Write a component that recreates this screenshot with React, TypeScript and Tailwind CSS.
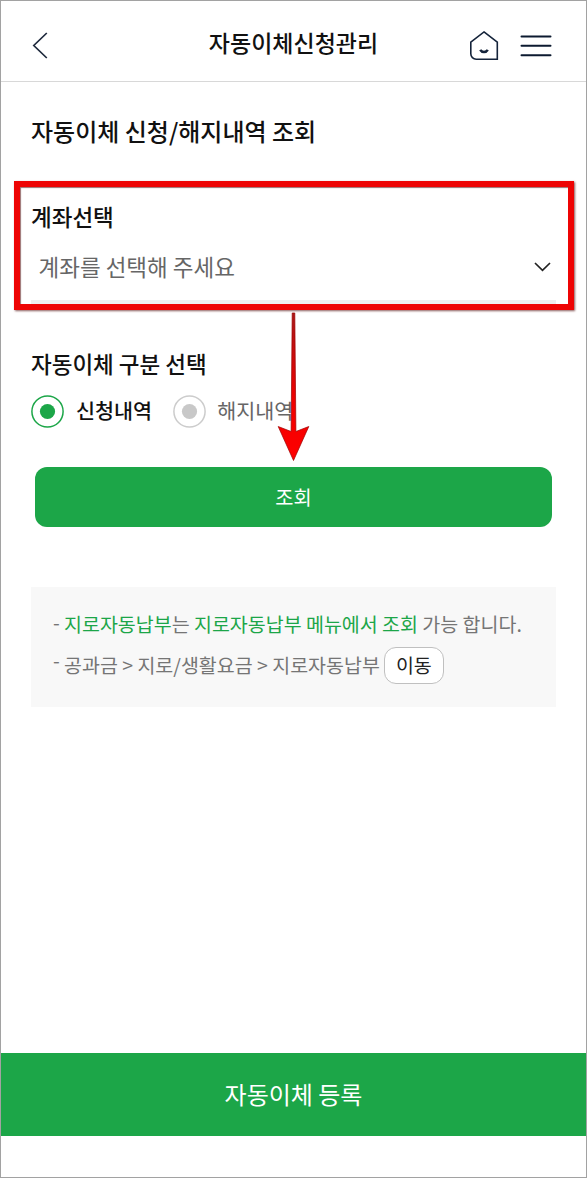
function BackIcon() {
  return (
    <svg width="18" height="28" viewBox="0 0 18 28" fill="none" stroke="#1f2a3d" strokeWidth="1.7">
      <path d="M15.8 1 2.8 13.5l13 12.5" />
    </svg>
  );
}

function HomeIcon() {
  return (
    <svg width="30" height="32" viewBox="0 0 30 32" fill="none" stroke="#14233a" strokeWidth="1.6">
      <path d="M15 1.9 28.3 12.1V29.2H7.2a5.4 5.4 0 0 1-5.4-5.4V12.1Z" />
      <path d="M11.2 19.9c1.6 2.8 6 2.8 7.6 0" strokeWidth="2.4" />
    </svg>
  );
}

function MenuIcon() {
  return (
    <svg width="32" height="24" viewBox="0 0 32 24" stroke="#0c1a30" strokeWidth="2" strokeLinecap="round">
      <path d="M1.5 2.5h29M1.5 11.8h29M1.5 21.2h29" />
    </svg>
  );
}

function Radio({ ring, dot }: { ring: string; dot: string }) {
  return (
    <svg width="33" height="33" viewBox="0 0 33 33">
      <circle cx="16.5" cy="16.5" r="15.6" fill="none" stroke={ring} strokeWidth="1.5" />
      <circle cx="16.5" cy="16.5" r="7.6" fill={dot} />
    </svg>
  );
}

function Guide() {
  return (
    <>
      <div className="absolute left-[13px] top-[180px] h-[129px] w-[560px] border-[6px] border-[#ee0404] shadow-[1px_1px_2px_#8a5a5a,inset_1px_1px_1px_#9a7070]" />
      <svg className="absolute left-[276px] top-[311px]" width="34" height="152" viewBox="0 0 34 152">
        <defs>
          <linearGradient id="shaft" x1="0" y1="0" x2="0" y2="1">
            <stop offset="0" stopColor="#a81818" />
            <stop offset="0.6" stopColor="#f00000" />
            <stop offset="1" stopColor="#ff0000" />
          </linearGradient>
        </defs>
        <path
          d="M15.2 1h2.6L18.9 119.5 31.8 114.5 16.5 148.5 1.2 114.5 14.1 119.5Z"
          fill="url(#shaft)"
          stroke="#9c0000"
          strokeWidth="0.7"
        />
      </svg>
    </>
  );
}

export default function App() {
  return (
    <div className="relative flex h-[1178px] w-[587px] flex-col border border-[#a2a2a2] bg-white font-['Noto_Sans_CJK_KR',sans-serif] text-[#111111]">
      <header className="grid h-[81px] grid-cols-[1fr_auto_1fr] items-center border-b border-[#d8d8d8] pl-[30px] pr-[34px]">
        <button className="mt-[9px] justify-self-start">
          <BackIcon />
        </button>
        <h1 className="pl-1 pt-[3px] text-[23px] font-medium leading-none">자동이체신청관리</h1>
        <div className="mt-[9px] flex items-center gap-[21px] justify-self-end">
          <HomeIcon />
          <MenuIcon />
        </div>
      </header>

      <main className="flex grow flex-col px-[30px]">
        <h2 className="mt-[31px] text-[24px] font-medium leading-9">자동이체 신청/해지내역 조회</h2>

        <div className="mt-[51px] text-[22.5px] font-medium leading-8">계좌선택</div>
        <div className="flex h-[72px] items-center justify-between border-b-4 border-[#eeeeee] pl-[7.5px] pr-[5px] pt-px text-[22.5px] text-[#666666]">
          <span>계좌를 선택해 주세요</span>
          <svg className="mt-px" width="17" height="10" viewBox="0 0 17 10" fill="none" stroke="#222222" strokeWidth="1.7">
            <path d="m1 1 7.5 7.3L16 1" />
          </svg>
        </div>

        <div className="mt-[43px] text-[22.5px] font-medium leading-8">자동이체 구분 선택</div>
        <div className="mt-4 flex h-[33px] items-center text-[20.7px]">
          <Radio ring="#1ca648" dot="#1ca648" />
          <span className="ml-3 mb-px font-medium">신청내역</span>
          <span className="ml-[21px]">
            <Radio ring="#cccccc" dot="#c8c8c8" />
          </span>
          <span className="ml-[11px] mb-px text-[#666666]">해지내역</span>
        </div>

        <button className="mx-[4px] mt-[39px] h-[60px] shrink-0 rounded-xl bg-[#1ca648] text-[19.8px] text-white">조회</button>

        <div className="mt-[60px] flex h-[120px] flex-col bg-[#f8f8f8] pl-[22px] pt-[17px] text-[19.5px] text-[#757575]">
          <div className="flex h-[40px] items-center whitespace-pre">
            <span className="mb-1 w-[11px]">-</span>
            <span className="text-[#1ca648]">지로자동납부</span>는 <span className="text-[#1ca648]">지로자동납부 메뉴에서 조회</span> 가능 합니다.
          </div>
          <div className="flex h-[42px] items-center whitespace-pre">
            <span className="mb-[10px] w-[11px]">-</span>
            공과금 &gt; 지로/생활요금 &gt; 지로자동납부
            <button className="ml-[4px] h-[37px] w-[60px] rounded-xl border border-[#c0c0c0] bg-white text-[#222222]">이동</button>
          </div>
        </div>
      </main>

      <button className="mb-[41px] h-[83px] shrink-0 bg-[#1ca648] pb-px text-[24px] text-white">자동이체 등록</button>
      <Guide />
    </div>
  );
}
